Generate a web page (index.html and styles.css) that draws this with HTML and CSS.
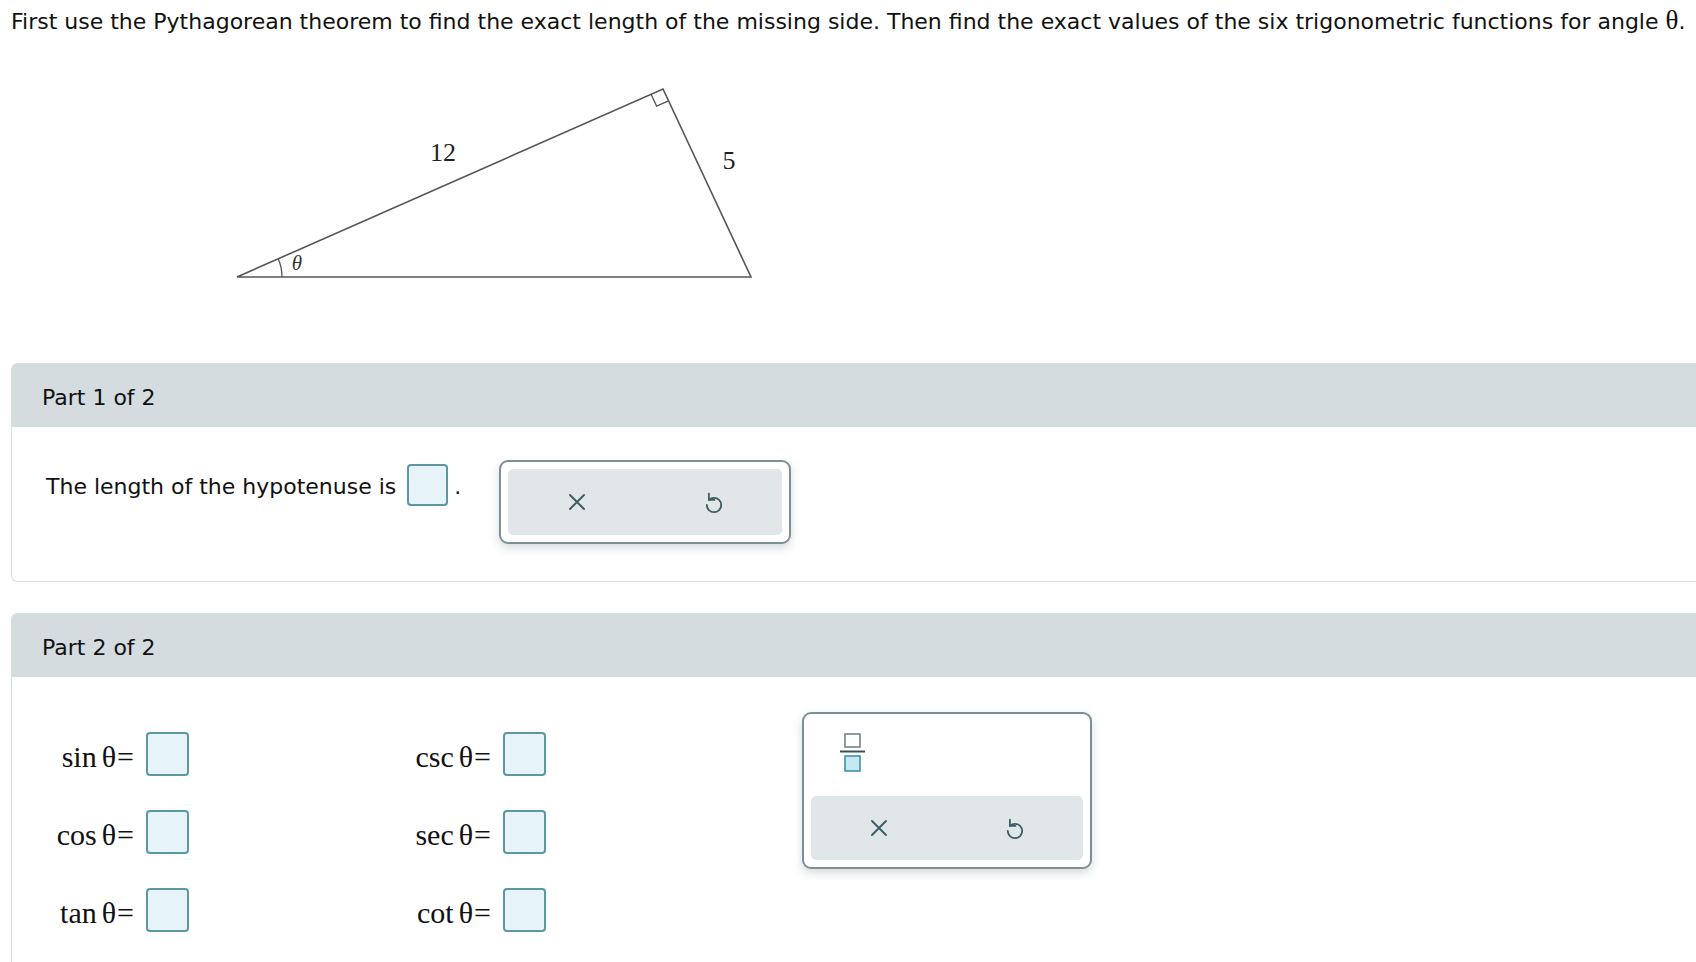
FILE: index.html
```html
<!DOCTYPE html>
<html lang="en">
<head>
<meta charset="utf-8">
<title>Pythagorean theorem</title>
<link rel="stylesheet" href="styles.css">
</head>
<body>
<p class="prompt">First use the Pythagorean theorem to find the exact length of the missing side. Then find the exact values of the six trigonometric functions for angle <span class="theta">θ</span>.</p>

<div class="figure">
  <svg class="triangle" width="800" height="326" viewBox="0 0 800 326">
    <polygon points="237,240 751,240 663,52" fill="none" stroke="#555" stroke-width="1.6" stroke-linejoin="miter"/>
    <polyline points="651.1,57.3 656.6,69.1 668.5,63.8" fill="none" stroke="#555" stroke-width="1.3"/>
    <path d="M282 240 A45 45 0 0 0 278.2 221.8" fill="none" stroke="#555" stroke-width="1.3"/>
    <text x="443" y="124" class="side-label" text-anchor="middle">12</text>
    <text x="729" y="132" class="side-label" text-anchor="middle">5</text>
    <text x="297" y="233" class="angle-label" text-anchor="middle">θ</text>
  </svg>
</div>

<section class="part">
  <div class="part-head">Part 1 of 2</div>
  <div class="part-body part1-body">
    <span class="stmt">The length of the hypotenuse is</span>
    <span class="ans-box"></span>
    <span class="dot">.</span>
    <div class="toolbar toolbar-small">
      <div class="tool-bar">
        <span class="tool-btn">
          <svg width="20" height="20" viewBox="0 0 20 20"><path d="M3 3 L17 17 M17 3 L3 17" stroke="#3d5c64" stroke-width="1.9" fill="none" stroke-linecap="round"/></svg>
        </span>
        <span class="tool-btn">
          <svg class="undo" width="20" height="24" viewBox="0 0 20 24" fill="none" stroke="#3d5c64" stroke-width="1.8" stroke-linecap="round" stroke-linejoin="round"><path d="M2.8 15 A7.2 7.2 0 1 0 10 7.8 A7.2 7.2 0 0 0 4.9 9.9"/><path d="M4.9 3.6 V9.9 H10.4"/></svg>
        </span>
      </div>
    </div>
  </div>
</section>

<section class="part part2">
  <div class="part-head">Part 2 of 2</div>
  <div class="part-body part2-body">
    <div class="eq-grid">
      <span class="eq-label"><span class="fn">sin</span><span class="var">θ</span><span class="eq">=</span></span>
      <span class="ans-box big"></span>
      <span class="eq-label"><span class="fn">csc</span><span class="var">θ</span><span class="eq">=</span></span>
      <span class="ans-box big"></span>

      <span class="eq-label"><span class="fn">cos</span><span class="var">θ</span><span class="eq">=</span></span>
      <span class="ans-box big"></span>
      <span class="eq-label"><span class="fn">sec</span><span class="var">θ</span><span class="eq">=</span></span>
      <span class="ans-box big"></span>

      <span class="eq-label"><span class="fn">tan</span><span class="var">θ</span><span class="eq">=</span></span>
      <span class="ans-box big"></span>
      <span class="eq-label"><span class="fn">cot</span><span class="var">θ</span><span class="eq">=</span></span>
      <span class="ans-box big"></span>
    </div>

    <div class="toolbar toolbar-large">
      <div class="tool-top">
        <svg class="frac-icon" width="28" height="42" viewBox="0 0 28 42">
          <rect x="7" y="2" width="15" height="13" fill="#fff" stroke="#74858c" stroke-width="1.6"/>
          <line x1="2" y1="19.5" x2="27" y2="19.5" stroke="#3b4e55" stroke-width="2"/>
          <rect x="7" y="24" width="15" height="15" fill="#c4e7f0" stroke="#3f95a6" stroke-width="1.6"/>
        </svg>
      </div>
      <div class="tool-bar">
        <span class="tool-btn">
          <svg width="20" height="20" viewBox="0 0 20 20"><path d="M3 3 L17 17 M17 3 L3 17" stroke="#3d5c64" stroke-width="1.9" fill="none" stroke-linecap="round"/></svg>
        </span>
        <span class="tool-btn">
          <svg class="undo" width="20" height="24" viewBox="0 0 20 24" fill="none" stroke="#3d5c64" stroke-width="1.8" stroke-linecap="round" stroke-linejoin="round"><path d="M2.8 15 A7.2 7.2 0 1 0 10 7.8 A7.2 7.2 0 0 0 4.9 9.9"/><path d="M4.9 3.6 V9.9 H10.4"/></svg>
        </span>
      </div>
    </div>
  </div>
</section>
</body>
</html>
```

FILE: styles.css
```css
* { box-sizing: border-box; }

html, body {
  margin: 0;
  padding: 0;
  overflow: hidden;
  background: #ffffff;
}

body {
  font-family: "DejaVu Sans", Verdana, sans-serif;
  font-size: 22px;
  color: #111;
  width: 1696px;
  height: 962px;
}

.prompt {
  margin: 7px 0 0 11px;
  height: 30px;
  line-height: 30px;
  white-space: nowrap;
  font-size: 22px;
}

.prompt .theta {
  font-family: "Liberation Serif", "Times New Roman", serif;
  font-size: 27px;
  line-height: 20px;
}

.figure {
  height: 326px;
}

.triangle {
  display: block;
}

.side-label {
  font-family: "Liberation Serif", "Times New Roman", serif;
  font-size: 26px;
  fill: #222;
}

.angle-label {
  font-family: "Liberation Serif", "Times New Roman", serif;
  font-style: italic;
  font-size: 21px;
  fill: #333;
}

.part {
  margin-left: 11px;
  margin-right: -40px;
  border: 1px solid #d9e0e3;
  border-right: none;
  border-radius: 6px 0 0 6px;
  background: #fff;
}

.part2 {
  margin-top: 31px;
}

.part-head {
  height: 63px;
  background: #d4dce0;
  border-radius: 5px 0 0 0;
  padding: 4px 0 0 30px;
  display: flex;
  align-items: center;
  font-size: 22px;
  color: #111;
}

.part-body {
  display: flex;
  align-items: flex-start;
}

.part1-body {
  padding: 33px 0 37px 34px;
}

.stmt {
  margin-top: 4px;
  line-height: 46px;
  white-space: nowrap;
}

.ans-box {
  display: inline-block;
  width: 41px;
  height: 42px;
  margin-top: 4px;
  margin-left: 11px;
  border: 2px solid #5c97a4;
  border-radius: 4px;
  background: #e6f3f8;
}

.dot {
  margin-top: 4px;
  line-height: 46px;
  margin-left: 6px;
}

.toolbar {
  border: 2px solid #7d8f96;
  border-radius: 9px;
  background: #fff;
  padding: 7px;
  box-shadow: 0 4px 10px rgba(70, 90, 100, 0.22);
}

.toolbar-small {
  width: 292px;
  height: 84px;
  margin-left: 38px;
}

.tool-bar {
  display: flex;
  height: 66px;
  background: #e1e6e9;
  border-radius: 5px;
}

.tool-btn {
  flex: 1;
  display: flex;
  align-items: center;
  justify-content: center;
}

.tool-btn svg {
  display: block;
}

.part2-body {
  padding: 35px 0 120px 0;
}

.eq-grid {
  margin-top: 20px;
  display: grid;
  grid-template-columns: 122px 43px 290px 43px;
  column-gap: 12px;
  row-gap: 34px;
  align-items: center;
}

.eq-label {
  font-family: "Liberation Serif", "Times New Roman", serif;
  font-size: 30px;
  text-align: right;
  white-space: nowrap;
  color: #111;
  height: 44px;
  line-height: 50px;
}

.eq-label .var {
  margin-left: 5px;
}

.eq-label .eq {
  margin-left: 1px;
}

.ans-box.big {
  width: 43px;
  height: 44px;
  margin: 0;
}

.toolbar-large {
  width: 290px;
  height: 157px;
  margin-left: 256px;
  display: flex;
  flex-direction: column;
}

.tool-top {
  height: 78px;
  display: flex;
  align-items: flex-start;
  padding-left: 27px;
  padding-top: 11px;
}

.frac-icon {
  display: block;
}
```
